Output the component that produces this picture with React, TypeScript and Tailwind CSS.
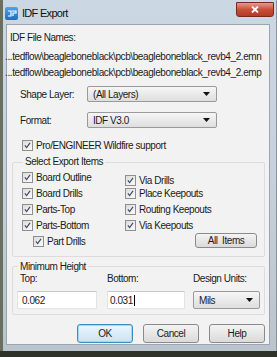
import React from 'react';

const font = { fontFamily: '"Liberation Sans", Arial, sans-serif' };

function Check({ label, className = '' }: { label: string; className?: string }) {
  return (
    <div className={`flex items-center gap-[3px] h-[16px] ${className}`}>
      <div className="relative w-[11px] h-[11px] border border-[#8f8f8f] bg-gradient-to-br from-[#dcdcdc] to-[#fbfbfb] shrink-0">
        <svg viewBox="0 0 11 11" className="absolute inset-0 w-full h-full">
          <path d="M2.3 5.4 L4.4 8 L8.6 2.2" fill="none" stroke="#3c4a5c" strokeWidth="1.4" />
        </svg>
      </div>
      <span className="whitespace-nowrap">{label}</span>
    </div>
  );
}

function Select({ value, className = '' }: { value: string; className?: string }) {
  return (
    <div className={`flex items-center justify-between border border-[#9a9a9a] rounded-[2px] bg-gradient-to-b from-[#f6f6f6] to-[#dedede] pl-[5px] pr-[6px] ${className}`}>
      <span>{value}</span>
      <svg width="7" height="4" viewBox="0 0 7 4"><path d="M0 0h7L3.5 4z" fill="#111" /></svg>
    </div>
  );
}

function Button({ label, primary = false }: { label: string; primary?: boolean }) {
  return (
    <div className={`w-[56px] h-[19px] flex items-center justify-center rounded-[3px] border bg-gradient-to-b ${primary ? 'border-[#3d8ec0] from-[#eaf6fc] to-[#c9e4f3] shadow-[inset_0_0_0_1px_#9fd6f0]' : 'border-[#8a8a8a] from-[#f4f4f4] to-[#dadada]'}`}>
      {label}
    </div>
  );
}

export default function App() {
  return (
    <div className="w-[277px] h-[357px] bg-[#2f3228] overflow-hidden text-[10px] tracking-[-0.45px] text-[#1b1b1b]" style={font}>
      <div className="h-[351px] flex flex-col bg-gradient-to-b from-[#cbd7e3] via-[#c5d1dc] to-[#b9c4cd] border-l-[3px] border-l-[#6b6f60] border-r border-r-[#8c939b] pl-[3px] pr-[6px] pb-[6px]">
        {/* title bar */}
        <div className="h-[24px] flex items-center shrink-0">
          <div className="w-[13px] h-[13px] ml-[-1px] mt-[3px] rounded-[2px] bg-gradient-to-b from-[#4aa6e8] to-[#1f6fc0] flex items-center justify-center">
            <svg width="10" height="9" viewBox="0 0 10 9"><path d="M1 2h3v5H1M5 2h4v2H6v3" fill="none" stroke="#fff" strokeWidth="1.2" /></svg>
          </div>
          <span className="ml-[4px] mt-[3px] text-[11px] tracking-[-0.7px] text-[#111]">IDF Export</span>
          <div className="ml-auto mr-[-4px] mt-[-5px] w-[38px] h-[15px] rounded-b-[3px] border border-[#7a2a20] bg-gradient-to-b from-[#e49a88] via-[#c8503b] to-[#b33b26] flex items-center justify-center">
            <svg width="8" height="7" viewBox="0 0 8 7"><path d="M1 0.5L7 6.5M7 0.5L1 6.5" stroke="#fff" strokeWidth="1.8" /></svg>
          </div>
        </div>

        {/* client area */}
        <div className="flex-1 bg-[#f2f2f2] border border-[#9aa5b1] flex flex-col pl-[3px] pr-[4px]">
          <div className="h-[16px] mt-[4px] flex items-center">IDF File Names:</div>
          <div className="h-[16px] mt-[3px] flex items-center whitespace-nowrap ml-[-5px] tracking-[-0.4px]">...tedflow\beagleboneblack\pcb\beagleboneblack_revb4_2.emn</div>
          <div className="h-[16px] flex items-center whitespace-nowrap ml-[-5px] tracking-[-0.4px]">...tedflow\beagleboneblack\pcb\beagleboneblack_revb4_2.emp</div>

          <div className="flex items-center mt-[6px] h-[16px]">
            <span className="w-[77px] pl-[10px]">Shape Layer:</span>
            <Select value="(All Layers)" className="w-[130px] h-[16px]" />
          </div>
          <div className="flex items-center mt-[10px] h-[16px]">
            <span className="w-[77px] pl-[10px]">Format:</span>
            <Select value="IDF V3.0" className="w-[130px] h-[16px]" />
          </div>
          <Check label="Pro/ENGINEER Wildfire support" className="mt-[9px] ml-[12px]" />

          {/* export items group */}
          <fieldset className="mt-[2px] ml-[2px] border border-[#dcdcdc] rounded-[2px] pl-[9px] pb-[7px] grid grid-cols-[103px_1fr]">
            <legend className="h-[14px] leading-[14px] ml-[1px] px-[2px]">Select Export Items</legend>
            <div className="flex flex-col">
              <Check label="Board Outline" />
              <Check label="Board Drills" />
              <Check label="Parts-Top" />
              <Check label="Parts-Bottom" />
              <Check label="Part Drills" className="ml-[11px]" />
            </div>
            <div className="flex flex-col pt-[3px]">
              <Check label="Via Drills" />
              <Check label="Place Keepouts" className="mt-[-3px]" />
              <Check label="Routing Keepouts" />
              <Check label="Via Keepouts" />
              <div className="flex justify-end pr-[7px]">
                <div className="w-[62px] h-[15px] flex items-center justify-center rounded-[3px] border border-[#8a8a8a] bg-gradient-to-b from-[#f4f4f4] to-[#dadada]">All&nbsp;&nbsp;Items</div>
              </div>
            </div>
          </fieldset>

          {/* minimum height group */}
          <fieldset className="mt-[3px] ml-[2px] border border-[#dcdcdc] rounded-[2px] pl-[4px] pb-[5px] grid grid-cols-[90px_86px_1fr]">
            <legend className="h-[13px] leading-[13px] ml-[1px] px-[2px]">Minimum Height</legend>
            <div className="flex flex-col">
              <span className="h-[11px] leading-[11px] pl-[3px]">Top:</span>
              <div className="mt-[7px] w-[80px] h-[18px] bg-white border border-[#e4e4e4] border-t-[#c9c9c9] flex items-center pl-[4px]">0.062</div>
            </div>
            <div className="flex flex-col">
              <span className="h-[11px] leading-[11px]">Bottom:</span>
              <div className="mt-[7px] w-[78px] h-[18px] bg-white border border-[#e4e4e4] border-t-[#c9c9c9] flex items-center pl-[2px]">0.031<span className="w-px h-[11px] ml-[1px] bg-black" /></div>
            </div>
            <div className="flex flex-col">
              <span className="h-[11px] leading-[11px]">Design Units:</span>
              <Select value="Mils" className="mt-[7px] w-[67px] h-[18px] pl-[3px]" />
            </div>
          </fieldset>

          <div className="flex justify-end gap-[10px] mt-[9px]">
            <Button label="OK" primary />
            <Button label="Cancel" />
            <Button label="Help" />
          </div>
        </div>
      </div>
    </div>
  );
}
